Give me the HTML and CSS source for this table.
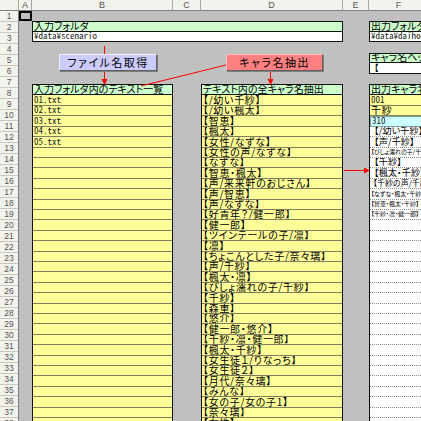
FILE: index.html
```html
<!DOCTYPE html>
<html lang="ja">
<head>
<meta charset="utf-8">
<title>Sheet</title>
<link rel="stylesheet" href="styles.css">
</head>
<body>
<div class="sheet">
  <div class="ch corner"></div>
  <div class="ch">A</div>
  <div class="ch">B</div>
  <div class="ch">C</div>
  <div class="ch">D</div>
  <div class="ch">E</div>
  <div class="ch">F</div>

  <div class="rownums">
    <div>1</div><div>2</div><div>3</div><div>4</div><div>5</div><div>6</div><div>7</div><div>8</div><div>9</div><div>10</div>
    <div>11</div><div>12</div><div>13</div><div>14</div><div>15</div><div>16</div><div>17</div><div>18</div><div>19</div><div>20</div>
    <div>21</div><div>22</div><div>23</div><div>24</div><div>25</div><div>26</div><div>27</div><div>28</div><div>29</div><div>30</div>
    <div>31</div><div>32</div><div>33</div><div>34</div><div>35</div><div>36</div><div>37</div><div>38</div><div>39</div><div>40</div>
  </div>

  <div class="sel"></div>

  <div class="box infolder">
    <div class="cell green">入力フォルダ</div>
    <div class="cell white mono">¥data¥scenario</div>
  </div>

  <div class="box outfolder">
    <div class="cell green">出力フォルダ</div>
    <div class="cell white mono">¥data¥daihon</div>
  </div>

  <div class="box charhdr">
    <div class="cell green">キャラ名ヘッダ</div>
    <div class="cell white big">【</div>
  </div>

  <div class="box list listb">
    <div class="cell green">入力フォルダ内のテキスト一覧</div>
    <div class="cell yellow mono">01.txt</div>
    <div class="cell yellow mono">02.txt</div>
    <div class="cell yellow mono">03.txt</div>
    <div class="cell yellow mono">04.txt</div>
    <div class="cell yellow mono">05.txt</div>
    <div class="cell yellow"></div><div class="cell yellow"></div><div class="cell yellow"></div><div class="cell yellow"></div><div class="cell yellow"></div>
    <div class="cell yellow"></div><div class="cell yellow"></div><div class="cell yellow"></div><div class="cell yellow"></div><div class="cell yellow"></div>
    <div class="cell yellow"></div><div class="cell yellow"></div><div class="cell yellow"></div><div class="cell yellow"></div><div class="cell yellow"></div>
    <div class="cell yellow"></div><div class="cell yellow"></div><div class="cell yellow"></div><div class="cell yellow"></div><div class="cell yellow"></div>
    <div class="cell yellow"></div><div class="cell yellow"></div><div class="cell yellow"></div><div class="cell yellow"></div><div class="cell yellow"></div>
    <div class="cell yellow"></div><div class="cell yellow"></div>
  </div>

  <div class="box list listd">
    <div class="cell green">テキスト内の全キャラ名抽出</div>
    <div class="cell yellow">【/幼い千紗】</div>
    <div class="cell yellow">【/幼い楓太】</div>
    <div class="cell yellow">【智恵】</div>
    <div class="cell yellow">【楓太】</div>
    <div class="cell yellow">【女性/なずな】</div>
    <div class="cell yellow">【女性の声/なずな】</div>
    <div class="cell yellow">【なずな】</div>
    <div class="cell yellow">【智恵・楓太】</div>
    <div class="cell yellow">【声/来来軒のおじさん】</div>
    <div class="cell yellow">【声/智恵】</div>
    <div class="cell yellow">【声/なずな】</div>
    <div class="cell yellow">【好青年？/健一郎】</div>
    <div class="cell yellow">【健一郎】</div>
    <div class="cell yellow">【ツインテールの子/凛】</div>
    <div class="cell yellow">【凛】</div>
    <div class="cell yellow">【ちょこんとした子/奈々璃】</div>
    <div class="cell yellow">【声/千紗】</div>
    <div class="cell yellow">【楓太・凛】</div>
    <div class="cell yellow">【びしょ濡れの子/千紗】</div>
    <div class="cell yellow">【千紗】</div>
    <div class="cell yellow">【森重】</div>
    <div class="cell yellow">【悠介】</div>
    <div class="cell yellow">【健一郎・悠介】</div>
    <div class="cell yellow">【千紗・凛・健一郎】</div>
    <div class="cell yellow">【楓太・千紗】</div>
    <div class="cell yellow">【女生徒１/りなっち】</div>
    <div class="cell yellow">【女生徒２】</div>
    <div class="cell yellow">【月代/奈々璃】</div>
    <div class="cell yellow">【みんな】</div>
    <div class="cell yellow">【女の子/女の子1】</div>
    <div class="cell yellow">【奈々璃】</div>
    <div class="cell yellow">【女性】</div>
  </div>

  <div class="box list listf">
    <div class="cell green">出力キャラ名</div>
    <div class="cell yellow mono">001</div>
    <div class="cell yellow">千紗</div>
    <div class="cell cyan mono">310</div>
    <div class="cell white dot big">【/幼い千紗】</div>
    <div class="cell white dot big">【声/千紗】</div>
    <div class="cell white dot tiny">【びしょ濡れの子/千紗】</div>
    <div class="cell white dot big">【千紗】</div>
    <div class="cell white dot big">【楓太・千紗】</div>
    <div class="cell white dot mid">【千紗の声/千紗】</div>
    <div class="cell white dot tiny">【なずな・楓太・千紗】</div>
    <div class="cell white dot tiny">【智恵・楓太・千紗】</div>
    <div class="cell white dot tiny">【千紗・凛・健一郎】</div>
    <div class="cell white dot"></div><div class="cell white dot"></div><div class="cell white dot"></div><div class="cell white dot"></div><div class="cell white dot"></div>
    <div class="cell white dot"></div><div class="cell white dot"></div><div class="cell white dot"></div><div class="cell white dot"></div><div class="cell white dot"></div>
    <div class="cell white dot"></div><div class="cell white dot"></div><div class="cell white dot"></div><div class="cell white dot"></div><div class="cell white dot"></div>
    <div class="cell white dot"></div><div class="cell white dot"></div><div class="cell white dot"></div><div class="cell white dot"></div><div class="cell white dot"></div>
  </div>

  <svg class="arrows" width="421" height="421" viewBox="0 0 421 421">
    <g stroke="#ff0000" stroke-width="1" fill="none">
      <line x1="104.5" y1="46" x2="104.5" y2="80"/>
      <line x1="270.5" y1="70" x2="270.5" y2="80"/>
      <line x1="226" y1="65" x2="141" y2="86"/>
      <line x1="344" y1="170.5" x2="365" y2="170.5"/>
    </g>
    <g fill="#ff0000">
      <polygon points="101.5,79 107.5,79 104.5,85"/>
      <polygon points="267.5,79 273.5,79 270.5,85"/>
      <polygon points="364,167.5 364,173.5 370,170.5"/>
    </g>
  </svg>

  <div class="btn btn-file">ファイル名取得</div>
  <div class="btn btn-chara">キャラ名抽出</div>
</div>
</body>
</html>
```

FILE: styles.css
```css
* { box-sizing: border-box; margin: 0; padding: 0; }
html, body { width: 421px; height: 421px; overflow: hidden; background: #c0c0c0; }
body {
  font-family: "Noto Sans CJK JP", sans-serif;
  font-feature-settings: "palt";
  color: #000;
}

.sheet {
  position: relative;
  display: grid;
  grid-template-columns: 19px 13px 141px 28px 142px 26px 60px;
  grid-template-rows: 11px repeat(40, 10.45px);
  width: 421px;
  height: 421px;
  overflow: hidden;
  background: #c0c0c0;
}

.ch {
  grid-row: 1;
  background: #f3f3ee;
  border-right: 1px solid #a8a8a0;
  border-bottom: 1px solid #808080;
  font: 9px/10px "Liberation Sans", sans-serif;
  color: #555;
  text-align: center;
}
.corner { background: #f3f3ee; }

.rownums {
  grid-column: 1;
  grid-row: 2 / 42;
  display: grid;
  grid-template-rows: repeat(40, 1fr);
  background: #f3f3ee;
  border-right: 1px solid #808080;
}
.rownums div {
  border-bottom: 1px solid #c8c8c0;
  font: 8.5px/10px "Liberation Sans", sans-serif;
  color: #555;
  text-align: center;
}

.sel {
  grid-column: 2;
  grid-row: 2;
  border: 2px solid #000;
}

.box {
  display: grid;
  border: 1px solid #101010;
  overflow: hidden;
}
.infolder { grid-column: 3 / 6; grid-row: 3 / 5; grid-template-rows: 1fr 1fr; }
.outfolder { grid-column: 7; grid-row: 3 / 5; grid-template-rows: 1fr 1fr; border-right: none; }
.charhdr { grid-column: 7; grid-row: 6 / 8; grid-template-rows: 1fr 1fr; border-right: none; }
.list { grid-row: 9 / 42; grid-template-rows: repeat(33, 1fr); border-bottom: none; }
.listb { grid-column: 3; }
.listd { grid-column: 5; }
.listf { grid-column: 7; border-right: none; }

.cell {
  font-size: 10px;
  line-height: 10px;
  letter-spacing: 0.7px;
  padding: 0 0 0 1px;
  white-space: nowrap;
  overflow: hidden;
  display: flex;
  align-items: flex-end;
  border-bottom: 1px solid #7f7f5f;
}
.green { background: #ccffcc; border-bottom-color: #101010; letter-spacing: 0; }
.yellow { background: #ffff99; }
.white { background: #ffffff; }
.cyan { background: #ccffff; border: 1px solid #80a0a0; }
.infolder .white, .outfolder .white, .charhdr .white { border-bottom: none; }
.mono {
  font-family: "Noto Sans Mono CJK JP", "Noto Sans CJK JP", monospace;
  font-feature-settings: normal;
  font-size: 9px;
  letter-spacing: 0;
  color: #222;
}
.dot { border-bottom: 1px dotted #909090; letter-spacing: 0; }
.big { font-size: 9px; padding-left: 4px; letter-spacing: 0.2px; }
.mid { font-size: 8px; padding-left: 3px; }
.tiny { font-size: 6px; }

.arrows {
  position: absolute;
  left: 0;
  top: 0;
  pointer-events: none;
}

.btn {
  position: absolute;
  top: 54px;
  height: 17px;
  font-size: 11px;
  line-height: 15px;
  letter-spacing: 1.5px;
  text-align: center;
  border-top: 1px solid #f0f0ff;
  border-left: 1px solid #f0f0ff;
  border-right: 1px solid #606060;
  border-bottom: 1px solid #606060;
  box-shadow: 1px 1px 0 #808080;
}
.btn-file { left: 59px; width: 98px; background: #ccccff; }
.btn-chara { left: 226px; width: 97px; background: #ff8080; border-top-color: #ffc0c0; border-left-color: #ffc0c0; }
```
